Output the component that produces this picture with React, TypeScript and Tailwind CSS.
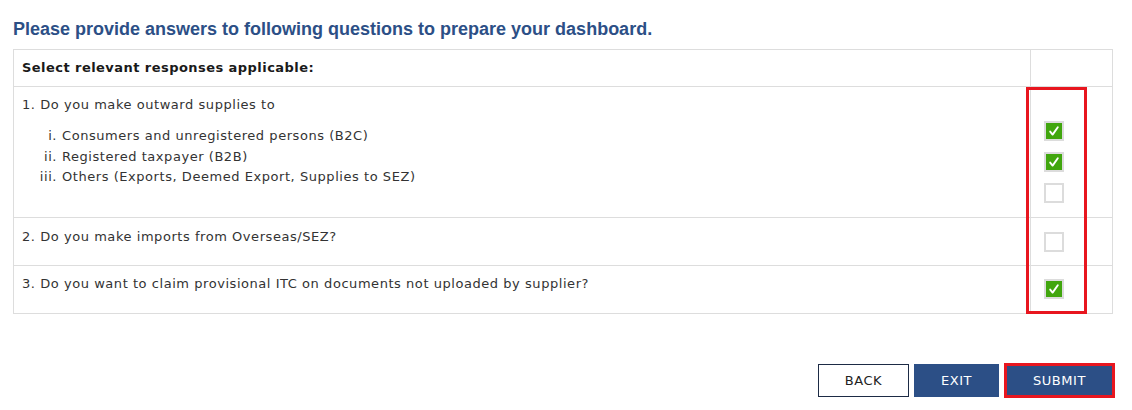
import React from 'react';

const verdana = { fontFamily: '"DejaVu Sans", Verdana, sans-serif' };

const Check = ({ on }: { on?: boolean }) => (
  <div className="w-[20px] h-[20px] border-2 border-[#dcdcdc] bg-white flex items-center justify-center">
    {on && (
      <div className="w-[16px] h-[16px] bg-[#41a60e] flex items-center justify-center">
        <svg width="12" height="12" viewBox="0 0 12 12">
          <path d="M2.2 6.6 L4.6 9.6 L9.8 2.2" fill="none" stroke="#fff" strokeWidth="1.9" strokeLinecap="round" strokeLinejoin="round" />
        </svg>
      </div>
    )}
  </div>
);

const subItems = [
  { n: 'i.', t: 'Consumers and unregistered persons (B2C)' },
  { n: 'ii.', t: 'Registered taxpayer (B2B)' },
  { n: 'iii.', t: 'Others (Exports, Deemed Export, Supplies to SEZ)' },
];

export default function App() {
  return (
    <div className="w-[1132px] h-[410px] bg-white text-[#333] px-[13px] pt-[18px] tracking-[0.55px]" style={verdana}>
      <h1 className="text-[18px] leading-[22px] font-bold text-[#2c4f86] mb-[9px] tracking-normal" style={{ fontFamily: '"Liberation Sans", Arial, sans-serif' }}>
        Please provide answers to following questions to prepare your dashboard.
      </h1>

      <div className="relative w-[1100px]">
        <div className="border border-[#ddd] text-[13px]">
          {/* header */}
          <div className="flex h-[37px] border-b border-[#ddd]">
            <div className="flex-1 flex items-center px-[8px] font-bold text-[#1a1a1a] tracking-[0.45px]">Select relevant responses applicable:</div>
            <div className="w-[82px] border-l border-[#ddd]" />
          </div>

          {/* question 1 */}
          <div className="flex h-[131px] border-b border-[#ddd]">
            <div className="flex-1 px-[8px] pt-[9px]">
              <div className="leading-[18px]">1. Do you make outward supplies to</div>
              <div className="mt-[12px]">
                {subItems.map((s) => (
                  <div key={s.n} className="flex leading-[20.5px]">
                    <span className="w-[40px] text-right pr-[5px]">{s.n}</span>
                    <span>{s.t}</span>
                  </div>
                ))}
              </div>
            </div>
            <div className="w-[82px] border-l border-[#ddd] pl-[13px] pt-[34px] flex flex-col gap-[11px]">
              <Check on />
              <Check on />
              <Check />
            </div>
          </div>

          {/* question 2 */}
          <div className="flex h-[48px] border-b border-[#ddd]">
            <div className="flex-1 px-[8px] pt-[10px] leading-[18px]">2. Do you make imports from Overseas/SEZ?</div>
            <div className="w-[82px] border-l border-[#ddd] pl-[13px] pt-[14px]">
              <Check />
            </div>
          </div>

          {/* question 3 */}
          <div className="flex h-[47px]">
            <div className="flex-1 px-[8px] pt-[9px] leading-[18px]">3. Do you want to claim provisional ITC on documents not uploaded by supplier?</div>
            <div className="w-[82px] border-l border-[#ddd] pl-[13px] pt-[13px]">
              <Check on />
            </div>
          </div>
        </div>

        {/* highlight box */}
        <div className="absolute left-[1013px] top-[38px] w-[61px] h-[227px] border-[3px] border-[#e8161f] pointer-events-none" />
      </div>

      <div className="flex justify-end gap-[5px] mt-[50px] w-[1102px] text-[13px]">
        <button className="w-[91px] h-[33px] border border-[#1d2b45] bg-white text-[#222]">BACK</button>
        <button className="w-[85px] h-[33px] bg-[#2c4f86] text-white">EXIT</button>
        <button className="w-[111px] h-[35px] -mt-[1px] bg-[#2c4f86] text-white border-[3px] border-[#e8161f]">SUBMIT</button>
      </div>
    </div>
  );
}
